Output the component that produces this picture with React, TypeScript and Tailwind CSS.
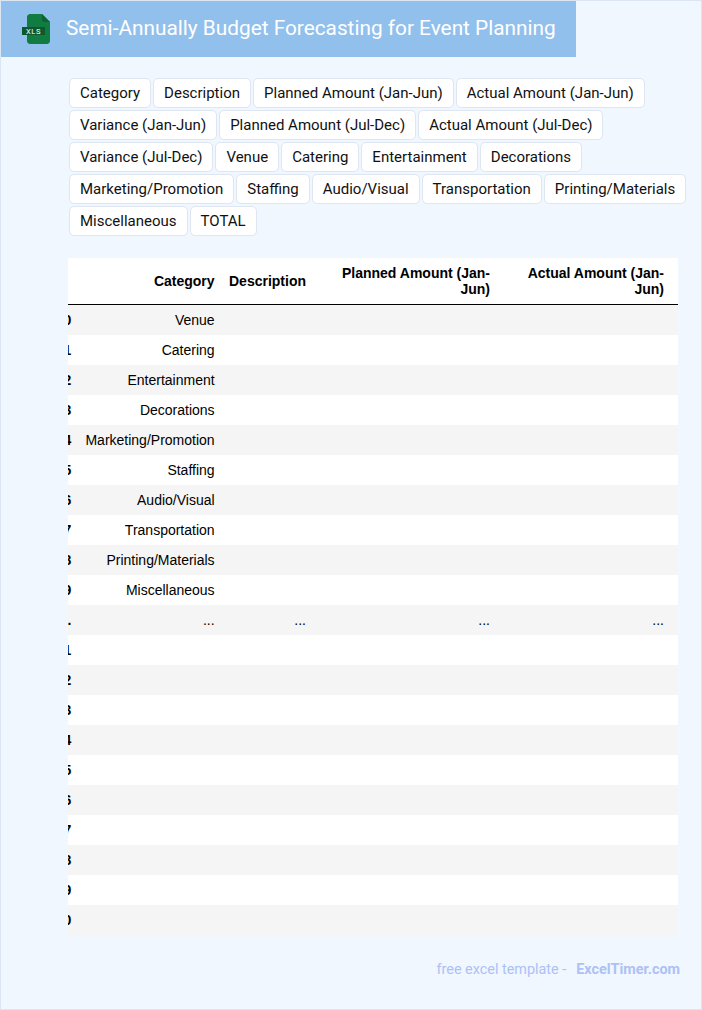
import React from 'react';

const tags = [
  'Category',
  'Description',
  'Planned Amount (Jan-Jun)',
  'Actual Amount (Jan-Jun)',
  'Variance (Jan-Jun)',
  'Planned Amount (Jul-Dec)',
  'Actual Amount (Jul-Dec)',
  'Variance (Jul-Dec)',
  'Venue',
  'Catering',
  'Entertainment',
  'Decorations',
  'Marketing/Promotion',
  'Staffing',
  'Audio/Visual',
  'Transportation',
  'Printing/Materials',
  'Miscellaneous',
  'TOTAL',
];

const rows = [
  ['0', 'Venue'],
  ['1', 'Catering'],
  ['2', 'Entertainment'],
  ['3', 'Decorations'],
  ['4', 'Marketing/Promotion'],
  ['5', 'Staffing'],
  ['6', 'Audio/Visual'],
  ['7', 'Transportation'],
  ['8', 'Printing/Materials'],
  ['9', 'Miscellaneous'],
  ['...', '...', '...', '...', '...'],
  ['1', ''],
  ['2', ''],
  ['3', ''],
  ['4', ''],
  ['5', ''],
  ['6', ''],
  ['7', ''],
  ['8', ''],
  ['9', ''],
  ['0', ''],
];

const XlsIcon = () => (
  <svg width="28" height="30" viewBox="0 0 28 30" className="shrink-0">
    <path d="M8 0H20L28 8V27C28 28.6 26.6 30 25 30H8C6.4 30 5 28.6 5 27V3C5 1.4 6.4 0 8 0Z" fill="#107C41" />
    <path d="M20 0L28 8H22C20.9 8 20 7.1 20 6V0Z" fill="#0C6334" />
    <rect x="0" y="13" width="23" height="8" fill="#0B5A2F" />
    <text x="11.5" y="20" textAnchor="middle" fontSize="7.5" letterSpacing="0.6" fill="#ffffff" fontFamily="Roboto, sans-serif">
      XLS
    </text>
  </svg>
);

export default function App() {
  return (
    <div className="w-[702px] h-[1010px] bg-[#f0f7ff] border border-[#dbe6f2] font-['Roboto',sans-serif] overflow-hidden">
      {/* Header */}
      <div className="w-[575px] h-[56px] bg-[#92c0ec] flex items-center pl-[21px] gap-[16px]">
        <XlsIcon />
        <h1 className="text-[20.8px] text-white font-normal leading-none whitespace-nowrap pb-[2px]">
          Semi-Annually Budget Forecasting for Event Planning
        </h1>
      </div>

      {/* Column tags */}
      <div className="flex flex-wrap gap-[2px] w-[622px] ml-[68px] mt-[21px]">
        {tags.map((tag) => (
          <span
            key={tag}
            className="h-[30px] px-[10px] flex items-center bg-white border border-[#dde6f1] rounded-[5px] text-[15px] text-[#111] leading-none whitespace-nowrap"
          >
            {tag}
          </span>
        ))}
      </div>

      {/* Table */}
      <div className="w-[610px] ml-[67px] mt-[22px] overflow-hidden bg-white font-['Liberation_Sans',sans-serif]">
        <table className="table-fixed border-separate border-spacing-0 w-[680px] ml-[-20px] text-[14px] text-black">
          <colgroup>
            <col className="w-[30px]" />
            <col className="w-[144px]" />
            <col className="w-[91px]" />
            <col className="w-[184px]" />
            <col className="w-[174px]" />
            <col className="w-[57px]" />
          </colgroup>
          <thead>
            <tr className="h-[47px] font-bold leading-[16px]">
              <th className="px-[7px] border-b border-black"></th>
              <th className="pl-[7px] pr-[7.4px] text-right border-b border-black">Category</th>
              <th className="px-[7px] text-left border-b border-black">Description</th>
              <th className="px-[7px] text-right border-b border-black">Planned Amount (Jan-Jun)</th>
              <th className="px-[7px] text-right border-b border-black">Actual Amount (Jan-Jun)</th>
              <th className="px-[7px] border-b border-black"></th>
            </tr>
          </thead>
          <tbody>
            {rows.map((row, i) => (
              <tr key={i} className={`h-[30px] ${i % 2 === 0 ? 'bg-[#f5f5f5]' : 'bg-white'}`}>
                <td className="pl-[7px] pr-[6.6px] text-right font-bold whitespace-nowrap">{row[0]}</td>
                <td className="pl-[7px] pr-[7.4px] text-right whitespace-nowrap">{row[1]}</td>
                <td className="px-[7px] text-right">{row[2]}</td>
                <td className="px-[7px] text-right">{row[3]}</td>
                <td className="px-[7px] text-right">{row[4]}</td>
                <td></td>
              </tr>
            ))}
          </tbody>
        </table>
      </div>

      {/* Footer */}
      <div className="w-[679px] mt-[27px] flex justify-end gap-[10px] text-[14.4px] leading-[16px] text-[#adc1f5]">
        <span>free excel template -</span>
        <span className="font-bold">ExcelTimer.com</span>
      </div>
    </div>
  );
}
